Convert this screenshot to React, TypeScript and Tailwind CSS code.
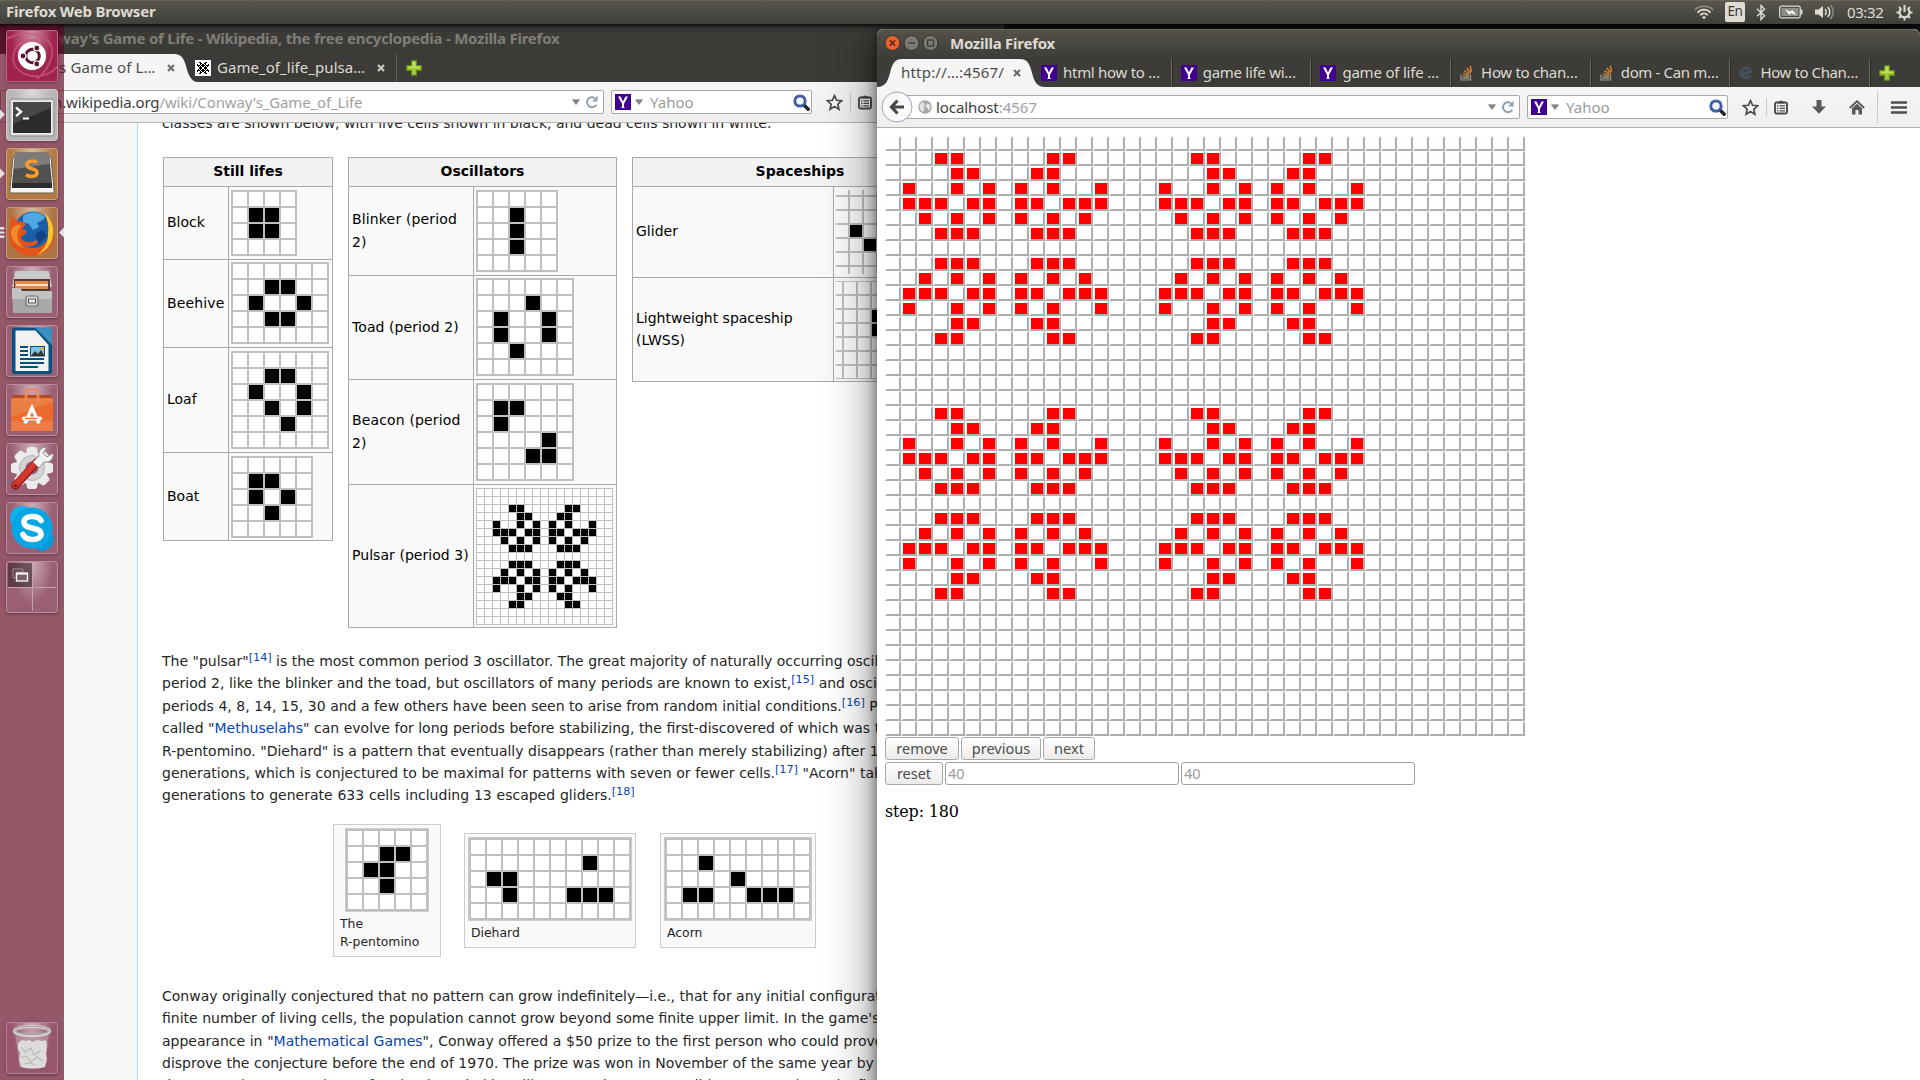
import React from "react";

type Cell = [number, number];

/* Grid of live and dead cells, used by every pattern figure of the article. */
function Life({ cols, rows, live, pitch = 16, line = 2 }: { cols: number; rows: number; live: Cell[]; pitch?: number; line?: number }) {
  const w = cols * pitch + line;
  const h = rows * pitch + line;
  const on = new Set(live.map(([r, c]) => r * 100 + c));
  const size = pitch - line;
  return (
    <svg width={w} height={h} viewBox={`0 0 ${w} ${h}`} shapeRendering="crispEdges" className="block shrink-0">
      <rect width={w} height={h} fill="#bfbfbf" />
      {Array.from({ length: rows * cols }, (_, i) => {
        const r = Math.floor(i / cols);
        const c = i % cols;
        return <rect key={i} x={c * pitch + line} y={r * pitch + line} width={size} height={size} fill={on.has(r * 100 + c) ? "#000" : "#fff"} />;
      })}
    </svg>
  );
}

const TOP_HALF: number[][] = [
  [3, 4, 10, 11],
  [4, 5, 9, 10],
  [1, 4, 6, 8, 10, 13],
  [1, 2, 3, 5, 6, 8, 9, 11, 12, 13],
  [2, 4, 6, 8, 10, 12],
  [3, 4, 5, 9, 10, 11],
];
const PULSAR: Cell[] = TOP_HALF.flatMap((cs, i) => cs.flatMap((c): Cell[] => [[i + 1, c], [13 - i, c]]));

/* Window chrome icons */

const Plus = () => (
  <svg width="16" height="16" viewBox="0 0 16 16" className="shrink-0">
    <path d="M5.500.7h5v4.800h4.800v5h-4.800v4.800h-5v-4.800H.7v-5h4.800z" fill="#8ab82c" stroke="#5d8f1c" />
    <path d="M6.500 1.800h3v4.700h4.700v1.900H1.800V6.500h4.700z" fill="#c6df52" />
    <path d="M6.500 8h3v6.200h-3z" fill="#a5cc3a" />
  </svg>
);
const YahooIcon = () => (
  <svg width="16" height="16" viewBox="0 0 16 16" className="shrink-0">
    <rect width="16" height="16" fill="#400090" />
    <path d="M3 2.500h2.600L8 7.400l2.400-4.900H13L9 9.800V13.500h1V14H6v-.5h1V9.800z" fill="#fff" />
  </svg>
);
const Arrow = () => (
  <svg width="8" height="6" viewBox="0 0 8 6" className="shrink-0">
    <path d="M.5.8h7L4 5.500z" fill="#8a8a8a" stroke="#6a6a6a" strokeWidth=".6" />
  </svg>
);
const Reload = () => (
  <svg width="14" height="14" viewBox="0 0 14 14" className="shrink-0">
    <path d="M11.300 9.800A5 5 0 1 1 10 3.200" fill="none" stroke="#93a0ae" strokeWidth="2" />
    <path d="M12.600.8v5.700H7z" fill="#93a0ae" />
  </svg>
);
const Magnifier = () => (
  <svg width="17" height="17" viewBox="0 0 17 17" className="shrink-0">
    <path d="M11.500 11.500l3.700 3.700" stroke="#222" strokeWidth="3.400" strokeLinecap="round" />
    <circle cx="7" cy="7" r="5.200" fill="#eef3fb" stroke="#27408b" strokeWidth="2.800" />
    <circle cx="7" cy="7" r="5.400" fill="none" stroke="#6e8fd0" strokeWidth=".8" />
  </svg>
);
const Star = () => (
  <svg width="17" height="17" viewBox="0 0 17 17" className="shrink-0">
    <path d="M8.500 1.600l2.100 4.700 5 .5-3.800 3.400 1.100 5-4.400-2.600-4.400 2.600 1.100-5L1.400 6.800l5-.5z" fill="#fafafa" stroke="#4a4a4a" strokeWidth="1.700" strokeLinejoin="miter" />
  </svg>
);
const Clipboard = () => (
  <svg width="14" height="16" viewBox="0 0 14 16" className="shrink-0">
    <rect x="1" y="3.500" width="12" height="11" rx="1.500" fill="#fafafa" stroke="#4a4a4a" strokeWidth="1.900" />
    <path d="M3.500 4.500V2.500h2a1.600 1.600 0 0 1 3 0h2v2z" fill="#4a4a4a" />
    <path d="M3 6.800h1.500M5.500 6.800H11M3 9.300h1.500M5.500 9.300H11M3 11.800h1.500M5.500 11.800H11" stroke="#4a4a4a" strokeWidth="1.300" />
  </svg>
);
const Close = ({ c }: { c: string }) => (
  <svg width="8" height="8" viewBox="0 0 8 8" className="shrink-0">
    <path d="M1 1l6 6M7 1l-6 6" stroke={c} strokeWidth="2.100" />
  </svg>
);
const StackIcon = () => (
  <svg width="13" height="16" viewBox="0 0 13 16" className="shrink-0">
    <path d="M1 9.500V15h9.500V9.500" fill="none" stroke="#9a9b9c" strokeWidth="1.200" />
    <path d="M2.500 13h6.500" stroke="#b0a890" strokeWidth="1.200" />
    <path d="M2.600 10.800l6.400.7" stroke="#a98f5e" strokeWidth="1.300" />
    <path d="M3 8.300l6.200 1.900" stroke="#c08b44" strokeWidth="1.300" />
    <path d="M4.200 5.600l5.500 3.400" stroke="#d48336" strokeWidth="1.300" />
    <path d="M6.800 3l3.800 5" stroke="#e8812e" strokeWidth="1.400" />
    <path d="M10.200.8l1.300 6" stroke="#f48024" strokeWidth="1.500" />
  </svg>
);

/* Launcher */

function Tile({ tint, children }: { tint: string; children?: React.ReactNode }) {
  return (
    <div className={`relative flex h-[52px] w-[52px] shrink-0 items-center justify-center overflow-hidden rounded-[4px] border border-white/30 shadow-[0_1px_3px_rgba(0,0,0,0.35)] ${tint}`}>
      <div className="absolute inset-0 bg-[radial-gradient(ellipse_at_50%_0%,rgba(255,255,255,0.5),rgba(255,255,255,0)_60%)]" />
      <svg width="50" height="50" viewBox="0 0 50 50" className="relative">{children}</svg>
    </div>
  );
}

const TEETH = [0, 45, 90, 135, 180, 225, 270, 315];

function Launcher() {
  return (
    <div className="absolute left-0 top-0 z-20 flex h-[1056px] w-16 flex-col items-center bg-[rgba(95,2,28,0.65)] pt-[6px]">
      <div className="flex flex-col gap-[7px]">
        <Tile tint="bg-[#a0234f]">
          <path d="M0 8C14 0 36 0 44 14C48 26 40 40 30 48M50 36C36 52 8 46 6 28C6 14 18 6 30 10" fill="none" stroke="#c9587f" strokeWidth="2" opacity=".7" />
          <circle cx="25" cy="25" r="14" fill="#fff" />
          <circle cx="25.500" cy="25" r="6.800" fill="none" stroke="#5e1435" strokeWidth="3" />
          <g fill="#5e1435" stroke="#fff" strokeWidth="1.200">
            <circle cx="16" cy="25" r="3" /><circle cx="29.800" cy="17" r="3" /><circle cx="29.800" cy="33" r="3" />
          </g>
        </Tile>
        <Tile tint="bg-[#b9b4b6]">
          <rect x="3" y="9" width="44" height="37" rx="2" fill="#d9d9d9" stroke="#8b8b8b" />
          <rect x="5.500" y="11.500" width="39" height="32" fill="#2b2b2a" stroke="#f0f0f0" />
          <path d="M6 12h38v6L6 34z" fill="#474745" />
          <path d="M9 17.500l5 4.300-5 4.300" fill="none" stroke="#fff" strokeWidth="2.400" />
          <path d="M16 28.500h6" stroke="#fff" strokeWidth="1.800" />
        </Tile>
        <Tile tint="bg-[#b07c43]">
          <path d="M6 8h38l3 32v3q0 1-1 1H4q-1 0-1-1v-3z" fill="#f4f4f4" stroke="#6d5a44" />
          <path d="M8 4.500q0-1 1-1h32q1 0 1 1l3 29.500H5z" fill="#52504e" />
          <path d="M8 4.500q0-1 1-1h32q1 0 1 1l1 10.500L7 20z" fill="#7d7b79" />
          <path d="M5 34h40v5H5z" fill="#2c2b2a" />
          <path d="M30 13.500c-3-2.500-10-2-10 2.500 0 5 10 2.500 10 7.500 0 4.500-7 5-11 2.200" fill="none" stroke="#ff9b28" strokeWidth="3.500" />
        </Tile>
        <Tile tint="bg-[#ae7444]">
          <circle cx="26" cy="22" r="18.500" fill="#1b5fa8" />
          <path d="M16 8c6-5 16-5 22 1-2 4-5 5-8 5l2 5-6 3-4-6-6-2z" fill="#4fa8e0" />
          <path d="M28 26l8-4 4 6-8 8z" fill="#12407e" />
          <path d="M4 8c3 1 5 3 7 6 3-1 6 0 8 2l-4 5 5 2c-1 4-5 4-6 7 3 5 9 5 13 3 2-1 4 0 4 1-3 4-8 6-14 4 12 6 22-2 25-9 1-5 0-9-1-14 4 4 6 9 6 14-1 12-11 19-22 19C11 48 2 39 2 27c0-8 3-12 2-19z" fill="#e2541c" />
          <path d="M37 5c7 5 10 13 9 22-1 10-8 17-16 20 8-6 11-13 11-20 1-9 0-15-4-22z" fill="#fbc62d" />
          <path d="M4 22c2-4 6-6 10-5l-3 6c-2 6 1 13 6 17C8 37 3 30 4 22z" fill="#f08a2a" />
        </Tile>
        <Tile tint="bg-[#9a5f74]">
          <path d="M8 4h34l3 16H5z" fill="#c9c9c9" />
          <path d="M7 12h36v12H7z" fill="#4e3c33" />
          <path d="M8 14h33v8H8z" fill="#e8874a" />
          <path d="M9 17h32v2H9z" fill="#ffe0bd" />
          <path d="M5 21h8l2 3h30v22H6z" fill="#a9a9a9" />
          <path d="M5 21h8l2 3h30v8H5z" fill="#c2c2c2" />
          <rect x="19" y="29" width="12" height="10" rx="2" fill="#d6d6d6" stroke="#6e6e6e" strokeWidth="1.200" />
          <rect x="21.500" y="32" width="7" height="4" fill="#eee" stroke="#555" />
        </Tile>
        <Tile tint="bg-[#9a5f74]">
          <path d="M7 1.500h24L45 18v28q0 2-2 2H7q-2 0-2-2V3.500q0-2 2-2z" fill="#09517f" />
          <path d="M8.500 4.500h20L41.500 19v26h-33z" fill="#f1f1f1" />
          <path d="M28 1.500h17V19z" fill="#3a8fbe" />
          <path d="M13 21h8M13 25h8M13 29h8M13 33h24M13 37h24M13 41h18" stroke="#06507c" strokeWidth="1.900" />
          <rect x="23.500" y="20.500" width="14" height="9.500" fill="#7cc4ea" stroke="#0a4d78" />
          <path d="M24 30l4-5 3 3 3-4 3.500 6z" fill="#333" />
          <circle cx="35.500" cy="22.500" r="1.500" fill="#e6b800" />
        </Tile>
        <Tile tint="bg-[#9a5f74]">
          <path d="M4 13h42v33H4z" fill="#ee7c45" />
          <path d="M4 13h42v23H4z" fill="#ec6a2c" />
          <path d="M4 13h42v4L4 32z" fill="#e9935a" opacity=".5" />
          <path d="M6 10h38l2 3H4z" fill="#b84a20" />
          <path d="M19 17V8q0-3 3-3h6q3 0 3 3v9" fill="none" stroke="#f08a58" strokeWidth="2.600" />
          <path d="M18 38.500L25 23l7 15.500" fill="none" stroke="#fff" strokeWidth="3.400" />
          <path d="M17 33.500h16" stroke="#fff" strokeWidth="4" strokeLinecap="round" />
          <path d="M18 33.500h12" stroke="#ee7033" strokeWidth="1.300" />
        </Tile>
        <Tile tint="bg-[#9a5f74]">
          <g fill="#ebebeb">
            {TEETH.map((a) => <path key={a} d="M20 4.500l1.500-1.500h7L30 4.500l1 6H19z" transform={`rotate(${a} 25 24)`} />)}
            <circle cx="25" cy="24" r="16.500" />
          </g>
          <circle cx="25" cy="24" r="12.500" fill="#d2d2d2" stroke="#b5b5b5" />
          <circle cx="25" cy="24" r="6.500" fill="#9a5f74" />
          <path d="M30 18L8.500 41.500" stroke="#8e1a16" strokeWidth="8" strokeLinecap="round" />
          <path d="M30 17.500L8.500 41" stroke="#d5382f" strokeWidth="6" strokeLinecap="round" />
          <path d="M26 18l6-6c-1-5 2-9 8-9l-4 6 4 4 6-4c1 6-3 10-9 9l-5 6z" fill="#f2f2f2" stroke="#8a8a8a" />
          <circle cx="8.500" cy="41.500" r="1.600" fill="#7c1512" />
        </Tile>
        <Tile tint="bg-[#9a5f74]">
          <circle cx="15" cy="15" r="12" fill="#13b0f0" />
          <circle cx="35" cy="36" r="11.500" fill="#009bd8" />
          <circle cx="25" cy="25" r="20.500" fill="#05a6e6" />
          <path d="M34 17.500c-3-5.500-17-5.500-17 1.500 0 8.500 17 4 17 12 0 7-14.500 7.500-18 .5" fill="none" stroke="#fff" strokeWidth="5.600" strokeLinecap="round" />
        </Tile>
        <Tile tint="bg-[#9a5f74]">
          <path d="M1 1h24v24H1z" fill="#3a2430" opacity=".62" />
          <path d="M25.500 1v48M1 25.500h48" stroke="#c8a4b0" strokeWidth="1" />
          <path d="M6 7h10v3H9v6H6z" fill="none" stroke="#a78d97" strokeWidth="1" />
          <rect x="9.500" y="11.500" width="11" height="7.500" fill="#7a5f6a" stroke="#fff" strokeWidth="1.300" />
          <path d="M9 11.500h12" stroke="#fff" strokeWidth="2" />
        </Tile>
      </div>
      <div className="mt-auto pb-[6px]">
        <Tile tint="bg-[#97566e]">
          <path d="M8 10h34l-4 34q-13 4-26 0z" fill="#c7a8b3" opacity=".4" />
          <path d="M11 20l4-3 4 1 3-1 4 2 4-2 5 1 4-1 1 6-1 8 1 5-2 8q-11 3-24 0l-2-8 1-6-2-4z" fill="#dcdcda" />
          <path d="M14 24l4 5 6-4 3 7 7-5M13 35l6-2 5 6 6-5 6 4M17 41l6-1 6 2" fill="none" stroke="#b9b9b7" strokeWidth="1.200" />
          <ellipse cx="25" cy="8" rx="17.500" ry="4.600" fill="none" stroke="#d8d8d4" strokeWidth="3" />
          <ellipse cx="25" cy="7.500" rx="17.500" ry="4.200" fill="none" stroke="#8b8f88" strokeWidth=".8" />
        </Tile>
      </div>
      <svg width="64" height="240" viewBox="0 0 64 240" className="absolute left-0 top-0">
        <g fill="#e6dde0">
          <path d="M0 85.500l5 5-5 5zM0 144.500l5 5-5 5zM64 203.500l-5 5 5 5z" />
          <path d="M0 203h3.500l1.500 1.500-1.500 1H0zM0 207.500h3.500l1.500 1-1.500 1H0zM0 211.500h3.500l1.500 1-1.500 1.500H0z" />
        </g>
      </svg>
    </div>
  );
}

/* Article tables */

function Row({ h, label, labelW, pad, children }: { h: string; label: string; labelW: string; pad: string; children?: React.ReactNode }) {
  return (
    <div className={`flex border-b border-[#aaa] ${h}`}>
      <div className={`flex shrink-0 items-center border-r border-[#aaa] pb-px pl-[3px] leading-[22.400px] ${labelW}`}>
        <span className="whitespace-pre">{label}</span>
      </div>
      <div className={`pl-[2px] ${pad}`}>{children}</div>
    </div>
  );
}

function Table({ title, w, children }: { title: string; w: string; children: React.ReactNode }) {
  return (
    <div className={`shrink-0 self-start border-x border-t border-[#aaa] bg-[#f9f9f9] text-black ${w}`}>
      <div className="flex h-[29px] items-center justify-center border-b border-[#aaa] bg-[#f2f2f2] pb-[2px] font-bold">{title}</div>
      {children}
    </div>
  );
}

/* Pitch-14 frame of an animated spaceship, cropped by its own bounds. */
function Ship({ h, xs, ys, cells }: { h: number; xs: number[]; ys: number[]; cells: Cell[] }) {
  return (
    <svg width="130" height={h} viewBox={`0 0 130 ${h}`} shapeRendering="crispEdges" className="block">
      <rect width="130" height={h} fill="#fbfbfb" />
      {xs.map((x) => <rect key={"x" + x} x={x} y="0" width="2" height={h} fill="#bfbfbf" />)}
      {ys.map((y) => <rect key={"y" + y} x="0" y={y} width="130" height="2" fill="#bfbfbf" />)}
      {cells.map(([x, y]) => <rect key={x + "," + y} x={x} y={y} width="12" height="12" />)}
    </svg>
  );
}

const Ref = ({ n }: { n: number }) => <span className="relative top-[-5px] text-[11.200px] leading-none text-[#0645ad]">[{n}]</span>;
const A = ({ children }: { children: React.ReactNode }) => <span className="text-[#0645ad]">{children}</span>;

function Thumb({ w, h, caption, center, children }: { w: string; h: string; caption: string; center?: boolean; children: React.ReactNode }) {
  return (
    <div className={`shrink-0 border border-[#ccc] bg-[#f9f9f9] pt-[3px] ${w} ${h}`}>
      <div className={`flex ${center ? "justify-center" : "pl-[3px]"}`}>
        <div className="border border-[#ccc]">{children}</div>
      </div>
      <div className="whitespace-pre pl-[6px] pt-[3px] text-[12.400px] leading-[18px]">{caption}</div>
    </div>
  );
}

function Article() {
  return (
    <div className="flex min-h-0 w-[878px] flex-1 overflow-hidden bg-white text-[14px] leading-[22.400px] text-[#252525] [font-family:'DejaVu_Sans',sans-serif]">
      <div className="w-[137px] shrink-0 bg-[#f6f6f6]" />
      <div className="flex min-w-0 flex-1 flex-col overflow-hidden whitespace-nowrap border-l border-[#a7d7f9] pl-6">
        <div className="-mt-[11px] h-[45px] shrink-0">classes are shown below, with live cells shown in black, and dead cells shown in white.</div>
        <div className="ml-px flex h-[493px] shrink-0">
          <Table title="Still lifes" w="w-[170px]">
            <Row h="h-[73px]" label="Block" labelW="w-[65px]" pad="pt-[3px]">
              <Life cols={4} rows={4} live={[[1, 1], [1, 2], [2, 1], [2, 2]]} />
            </Row>
            <Row h="h-[88px]" label="Beehive" labelW="w-[65px] tracking-[0.150px]" pad="pt-[2px]">
              <Life cols={6} rows={5} live={[[1, 2], [1, 3], [2, 1], [2, 4], [3, 2], [3, 3]]} />
            </Row>
            <Row h="h-[105px]" label="Loaf" labelW="w-[65px]" pad="pt-[3px]">
              <Life cols={6} rows={6} live={[[1, 2], [1, 3], [2, 1], [2, 4], [3, 2], [3, 4], [4, 3]]} />
            </Row>
            <Row h="h-[88px]" label="Boat" labelW="w-[65px]" pad="pt-[3px]">
              <Life cols={5} rows={5} live={[[1, 1], [1, 2], [2, 1], [2, 3], [3, 2]]} />
            </Row>
          </Table>
          <div className="w-[15px] shrink-0" />
          <Table title="Oscillators" w="w-[269px]">
            <Row h="h-[89px]" label={"Blinker (period\n2)"} labelW="w-[125px] tracking-[0.150px]" pad="pt-[3px]">
              <Life cols={5} rows={5} live={[[1, 2], [2, 2], [3, 2]]} />
            </Row>
            <Row h="h-[104px]" label="Toad (period 2)" labelW="w-[125px] tracking-[0.080px]" pad="pt-[2px]">
              <Life cols={6} rows={6} live={[[1, 3], [2, 1], [2, 4], [3, 1], [3, 4], [4, 2]]} />
            </Row>
            <Row h="h-[105px]" label={"Beacon (period\n2)"} labelW="w-[125px] tracking-[0.150px]" pad="pt-[3px]">
              <Life cols={6} rows={6} live={[[1, 1], [1, 2], [2, 1], [3, 4], [4, 3], [4, 4]]} />
            </Row>
            <Row h="h-[143px]" label="Pulsar (period 3)" labelW="w-[125px] tracking-[0.050px]" pad="pt-[3px]">
              <Life cols={17} rows={17} pitch={8} line={1} live={PULSAR.map(([r, c]): Cell => [r + 1, c + 1])} />
            </Row>
          </Table>
          <div className="w-[15px] shrink-0" />
          <Table title="Spaceships" w="w-[336px]">
            <Row h="h-[91px]" label="Glider" labelW="w-[201px]" pad="pt-[3px]">
              <Ship h={84} xs={[12, 26, 40]} ys={[5, 19, 33, 47, 61, 75]} cells={[[14, 35], [28, 49]]} />
            </Row>
            <Row h="h-[104px]" label={"Lightweight spaceship\n(LWSS)"} labelW="w-[201px]" pad="pt-[3px]">
              <Ship h={98} xs={[6, 20, 34]} ys={[-1, 13, 27, 41, 55, 69, 83, 97]} cells={[[36, 29], [36, 43]]} />
            </Row>
          </Table>
        </div>
        <div>The "pulsar"<Ref n={14} /> is the most common period 3 oscillator. The great majority of naturally occurring oscillators</div>
        <div className="[word-spacing:0.060px]">period 2, like the blinker and the toad, but oscillators of many periods are known to exist,<Ref n={15} /> and oscillators</div>
        <div className="[word-spacing:0.080px]">periods 4, 8, 14, 15, 30 and a few others have been seen to arise from random initial conditions.<Ref n={16} /> Patterns</div>
        <div className="[word-spacing:0.080px]">called "<A>Methuselahs</A>" can evolve for long periods before stabilizing, the first-discovered of which was the</div>
        <div>R-pentomino. "Diehard" is a pattern that eventually disappears (rather than merely stabilizing) after 130</div>
        <div className="[word-spacing:0.130px]">generations, which is conjectured to be maximal for patterns with seven or fewer cells.<Ref n={17} /> "Acorn" takes</div>
        <div className="[word-spacing:0.400px]">generations to generate 633 cells including 13 escaped gliders.<Ref n={18} /></div>
        <div className="ml-[171px] mt-[17px] flex h-[161px] shrink-0">
          <Thumb w="w-[108px]" h="h-[133px]" caption={"The\nR-pentomino"} center>
            <Life cols={5} rows={5} live={[[1, 2], [1, 3], [2, 1], [2, 2], [3, 2]]} />
          </Thumb>
          <div className="ml-[23px] mt-[9px]">
            <Thumb w="w-[172px]" h="h-[115px]" caption="Diehard">
              <Life cols={10} rows={5} live={[[1, 7], [2, 1], [2, 2], [3, 2], [3, 6], [3, 7], [3, 8]]} />
            </Thumb>
          </div>
          <div className="ml-[24px] mt-[9px]">
            <Thumb w="w-[156px]" h="h-[115px]" caption="Acorn">
              <Life cols={9} rows={5} live={[[1, 2], [2, 4], [3, 1], [3, 2], [3, 5], [3, 6], [3, 7]]} />
            </Thumb>
          </div>
        </div>
        <div>Conway originally conjectured that no pattern can grow indefinitely—i.e., that for any initial configuration</div>
        <div>finite number of living cells, the population cannot grow beyond some finite upper limit. In the game's</div>
        <div className="[word-spacing:0.200px]">appearance in "<A>Mathematical Games</A>", Conway offered a $50 prize to the first person who could prove</div>
        <div className="[word-spacing:0.100px]">disprove the conjecture before the end of 1970. The prize was won in November of the same year by</div>
        <div>the <A>Massachusetts Institute of Technology</A>, led by <A>Bill Gosper</A>; the "Gosper glider gun" produces its first</div>
      </div>
    </div>
  );
}

function LeftWindow() {
  return (
    <div className="absolute left-0 top-0 flex h-[1056px] w-[1004px] flex-col">
      <div className="flex h-[30px] shrink-0 items-center bg-linear-to-b from-[#2a2926] to-[#3c3b37] to-30% pb-[2px] pl-[30px] text-[15px] font-bold text-[#807d78]">
        <span className="w-[550px] whitespace-nowrap tracking-[-0.225px]">Conway's Game of Life - Wikipedia, the free encyclopedia - Mozilla Firefox</span>
      </div>
      <div className="flex h-[28px] shrink-0 items-center bg-[#3c3b37] text-[15px] text-[#dedbd3]">
        <div className="relative flex h-[28px] w-[195px] shrink-0 items-center text-[#4c4c4c]">
          <svg width="200" height="28" viewBox="0 0 200 28" className="absolute left-0 top-0">
            <path d="M0 0h174c8 0 10 5 12 12 2 8 5 16 12 16H0z" fill="#f6f5f4" />
          </svg>
          <span className="relative ml-[56px] w-[111px] whitespace-nowrap pb-px tracking-[0.150px]">'s Game of L…</span>
          <span className="relative"><Close c="#6b6b6b" /></span>
        </div>
        <svg width="16" height="16" viewBox="0 0 17 17" className="shrink-0" shapeRendering="crispEdges">
          <rect width="17" height="17" fill="#fff" />
          {PULSAR.map(([r, c]) => <rect key={r + "-" + c} x={c + 1} y={r + 1} width="1" height="1" />)}
        </svg>
        <span className="ml-[6px] w-[160px] whitespace-nowrap pb-px tracking-[0.050px]">Game_of_life_pulsa…</span>
        <Close c="#cfccc5" />
        <div className="ml-[11px] mr-[9px] h-[28px] w-px bg-[#5f5d57]" />
        <Plus />
      </div>
      <div className="flex h-[41px] shrink-0 items-start border-b border-[#b5b3b0] bg-linear-to-b from-[#f6f5f4] to-[#f0efed] pt-2 text-[15px]">
        <div className="flex h-[24px] w-[604px] shrink-0 items-center rounded-[2px] border border-[#aba9a6] bg-white pl-[52px] text-[#a0a0a0]">
          <span className="w-[519px] whitespace-nowrap tracking-[-0.130px]"><span className="text-[#3c3c3c]">n.wikipedia.org</span>/wiki/Conway's_Game_of_Life</span>
          <Arrow />
          <span className="ml-[5px]"><Reload /></span>
        </div>
        <div className="ml-[7px] flex h-[24px] w-[201px] shrink-0 items-center rounded-[2px] border border-[#aba9a6] bg-white pl-[3px] text-[#9a9a9a]">
          <YahooIcon />
          <span className="ml-[4px]"><Arrow /></span>
          <span className="ml-[7px] w-[143px] whitespace-nowrap">Yahoo</span>
          <Magnifier />
        </div>
        <div className="ml-[14px] flex h-[24px] items-center">
          <Star />
          <div className="ml-[7px] mr-[7px] h-[18px] w-px bg-[#c3cad2]" />
          <Clipboard />
        </div>
      </div>
      <Article />
    </div>
  );
}

/* Simulator window */

const LIVE = new Set(
  PULSAR.flatMap(([r, c]) => [0, 17].flatMap((dr) => [0, 16].map((dc) => (r + dr) * 40 + c + dc)))
);

function Board() {
  return (
    <div className="grid w-[640px] auto-rows-[15px] grid-cols-[repeat(40,16px)]">
      {Array.from({ length: 1600 }, (_, i) => (
        <div key={i} className={`border-2 border-b-[#aeaeae] border-l-[#fcfcfc] border-r-[#aeaeae] border-t-[#fcfcfc] ${LIVE.has(i) ? "bg-[#ff0000]" : "bg-white"}`} />
      ))}
    </div>
  );
}

const EIcon = () => (
  <svg width="14" height="14" viewBox="0 0 14 14" className="shrink-0">
    <path d="M3 8.300l8.500-2.300C11 3.200 9 2 6.800 2 4 2 2 4.300 2 7.200 2 10 4 12 7 12c2 0 3.300-.7 4.500-2" fill="none" stroke="#44505c" strokeWidth="3" />
  </svg>
);

function Tab({ icon, text, gap, t }: { icon: React.ReactNode; text: string; gap: string; t: string }) {
  return (
    <div className="flex h-[28px] w-[139.700px] shrink-0 items-center border-r border-[#6a6862] pl-[9px] shadow-[1px_0_0_#2b2a27]">
      {icon}
      <span className={`whitespace-nowrap pb-[2px] ${gap} ${t}`}>{text}</span>
    </div>
  );
}

const Btn = ({ w, children }: { w: string; children: string }) => (
  <div className={`flex h-[23px] shrink-0 items-center justify-center rounded-[3px] border border-[#aaa8a4] bg-linear-to-b from-white to-[#ecebe9] text-[#4c4c4c] ${w}`}>{children}</div>
);
const Field = () => <div className="flex h-[23px] w-[234px] shrink-0 items-center rounded-[3px] border border-[#a3a19d] bg-white pl-[2px] text-[#9b9b9b]">40</div>;

function RightWindow() {
  return (
    <div className="absolute left-[877px] top-[5px] z-10 flex h-[1100px] w-[1043px] flex-col rounded-t-[6px] bg-white shadow-[0_4px_14px_rgba(0,0,0,0.5),0_4px_50px_rgba(0,0,0,0.5)]">
      <div className="flex h-[30px] shrink-0 items-center rounded-t-[6px] border-t border-[#6b685d] bg-linear-to-b from-[#55524a] to-[#3d3c38] pb-[3px] pl-[7px]">
        <svg width="56" height="18" viewBox="0 0 56 18" className="shrink-0">
          <circle cx="8.500" cy="9" r="7.500" fill="#e8602f" stroke="#33312c" />
          <path d="M5.800 6.300l5.400 5.400M11.200 6.300l-5.400 5.400" stroke="#52251a" strokeWidth="1.400" />
          <circle cx="27.500" cy="9" r="7.500" fill="#7b7971" stroke="#33312c" />
          <path d="M24 9h7" stroke="#3a3935" strokeWidth="1.300" />
          <circle cx="46.500" cy="9" r="7.500" fill="#7b7971" stroke="#33312c" />
          <rect x="43.500" y="6" width="6" height="6" fill="none" stroke="#3a3935" strokeWidth="1.200" />
        </svg>
        <span className="ml-[10px] whitespace-nowrap pb-px text-[15px] font-bold leading-[20px] tracking-[-0.250px] text-[#dfdbd2]">Mozilla Firefox</span>
      </div>
      <div className="flex h-[28px] shrink-0 items-center bg-[#3d3c38] text-[15px] text-[#dfdbd2]">
        <div className="relative flex h-[28px] w-[155px] shrink-0 items-center text-[#4c4c4c]">
          <svg width="168" height="28" viewBox="0 0 168 28" className="absolute left-0 top-0">
            <path d="M0 28c9 0 11-7 13-14 2-8 4-14 12-14h118c8 0 10 6 12 14 2 7 4 14 13 14z" fill="#f6f5f4" />
          </svg>
          <span className="relative ml-[24px] w-[112px] whitespace-nowrap pb-[2px] tracking-[0.200px]">http://…:4567/</span>
          <span className="relative"><Close c="#6b6b6b" /></span>
        </div>
        <Tab icon={<YahooIcon />} gap="ml-[6px]" t="tracking-[-0.280px]" text="html how to …" />
        <Tab icon={<YahooIcon />} gap="ml-[6px]" t="tracking-[-0.280px]" text="game life wi…" />
        <Tab icon={<YahooIcon />} gap="ml-[6px]" t="tracking-[-0.200px]" text="game of life …" />
        <Tab icon={<StackIcon />} gap="ml-[8px]" t="tracking-[-0.300px]" text="How to chan…" />
        <Tab icon={<StackIcon />} gap="ml-[8px]" t="tracking-[-0.350px]" text="dom - Can m…" />
        <Tab icon={<EIcon />} gap="ml-[7px]" t="tracking-[-0.400px]" text="How to Chan…" />
        <div className="w-[9px] shrink-0" />
        <Plus />
      </div>
      <div className="relative flex h-[41px] shrink-0 items-start border-b border-[#aeaca9] bg-linear-to-b from-[#f6f5f4] to-[#f0efed] pt-2 text-[15px]">
        <svg width="32" height="32" viewBox="0 0 32 32" className="absolute left-[4px] top-[4px] z-10">
          <circle cx="16" cy="16" r="15" fill="#fafafa" stroke="#98a5b3" />
          <path d="M16.500 9.500L10.500 16l6 6.500M10.500 16H23" fill="none" stroke="#474747" strokeWidth="3.200" />
        </svg>
        <div className="ml-[28px] flex h-[24px] w-[615px] shrink-0 items-center rounded-[2px] border border-[#aba9a6] bg-white pl-[12px] text-[#a0a0a0]">
          <svg width="14" height="14" viewBox="0 0 14 14" className="shrink-0">
            <circle cx="7" cy="7" r="6.800" fill="#a6a6a6" />
            <path d="M1.500 5c2-3 4-3 5-3l-1 2 2 1-2 2 1 3-2 2C2 10 1 8 1.500 5zM9 3l3 2 .5 3-2 3-1-3-2-1z" fill="#e3e3e3" />
          </svg>
          <span className="ml-[4px] w-[552px] whitespace-nowrap"><span className="tracking-[-0.080px] text-[#3c3c3c]">localhost</span>:4567</span>
          <Arrow />
          <span className="ml-[5px]"><Reload /></span>
        </div>
        <div className="ml-[7px] flex h-[24px] w-[201px] shrink-0 items-center rounded-[2px] border border-[#aba9a6] bg-white pl-[3px] text-[#9a9a9a]">
          <YahooIcon />
          <span className="ml-[4px]"><Arrow /></span>
          <span className="ml-[7px] w-[143px] whitespace-nowrap">Yahoo</span>
          <Magnifier />
        </div>
        <div className="ml-[14px] flex h-[24px] items-center">
          <Star />
          <div className="ml-[7px] mr-[7px] h-[18px] w-px bg-[#c3cad2]" />
          <Clipboard />
          <svg width="14" height="14" viewBox="0 0 14 14" className="ml-[24px]">
            <path d="M4.500 0h5v6.500H14L7 13.700 0 6.500h4.500z" fill="#5a5a5a" />
          </svg>
          <svg width="16" height="15" viewBox="0 0 16 15" className="ml-[23px]">
            <path d="M.8 8L8 1.200 15.200 8" fill="none" stroke="#5a5a5a" strokeWidth="1.900" />
            <path d="M3 8.300L8 3.800l5 4.500V14.500H9.500V10h-3v4.500H3z" fill="#5a5a5a" />
          </svg>
          <div className="ml-[12px] mr-[13px] h-[32px] w-px bg-[#c3cad2]" />
          <svg width="16" height="13" viewBox="0 0 16 13">
            <path d="M0 1.500h16M0 6.500h16M0 11.500h16" stroke="#4d4d4d" strokeWidth="2.600" />
          </svg>
        </div>
      </div>
      <div className="flex flex-col pl-2 pt-2">
        <Board />
        <div className="mt-px flex gap-[2px] text-[14.500px]">
          <Btn w="w-[74px]">remove</Btn>
          <Btn w="w-[80px]">previous</Btn>
          <Btn w="w-[52px]">next</Btn>
        </div>
        <div className="mt-[2px] flex gap-[2px] text-[14.500px]">
          <Btn w="w-[58px]">reset</Btn>
          <Field />
          <Field />
        </div>
        <div className="mt-[16px] text-[16px] leading-[22px] tracking-[-0.180px] text-black [font-family:'DejaVu_Serif',serif]">step: 180</div>
      </div>
    </div>
  );
}

function TopPanel() {
  return (
    <div className="flex h-6 shrink-0 items-center border-t border-[#68664f] bg-linear-to-b from-[#58564e] to-[#3f3e39] pb-px pl-[6px] text-[15px] text-[#dfdbd2]">
      <span className="flex-1 pb-px font-bold tracking-[-0.220px]">Firefox Web Browser</span>
      <svg width="20" height="16" viewBox="0 0 20 16">
        <g fill="none" strokeWidth="1.700">
          <path d="M.8 6.200C5 .9 15 .9 19.200 6.200" stroke="#8d8b84" />
          <path d="M3.500 8.800c3-4.200 10-4.200 13 0" stroke="#dfdbd2" />
          <path d="M6.200 11.300c2-2.600 5.600-2.600 7.600 0" stroke="#dfdbd2" />
        </g>
        <path d="M8 13.200c1-1.200 3-1.200 4 0l-2 2z" fill="#dfdbd2" />
      </svg>
      <div className="ml-[11px] flex h-[20px] w-[20px] items-center justify-center rounded-[2px] bg-[#dfdbd2] text-[13.500px] leading-none tracking-[-0.500px] text-[#3c3b37]">En</div>
      <svg width="10" height="17" viewBox="0 0 10 17" className="ml-[11px]">
        <path d="M1 4.800l7.500 7L5 15.500V1.500l3.500 3.700L1 12.200" fill="none" stroke="#dfdbd2" strokeWidth="1.400" />
      </svg>
      <svg width="24" height="14" viewBox="0 0 24 14" className="ml-[13px]">
        <rect x=".7" y="1.200" width="20.500" height="11.600" rx="1.500" fill="none" stroke="#dfdbd2" strokeWidth="1.300" />
        <rect x="2.500" y="3" width="17" height="8" fill="#8f8d86" />
        <path d="M22.500 4.500v5" stroke="#dfdbd2" strokeWidth="1.800" />
        <path d="M6 4.500l6 2.300 1-2L17.500 10l-6-2-1 2z" fill="#fff" />
      </svg>
      <svg width="20" height="16" viewBox="0 0 20 16" className="ml-[12px]">
        <path d="M0 5.500h3.500L8 2v12L3.500 10.500H0z" fill="#dfdbd2" />
        <g fill="none" strokeWidth="1.500">
          <path d="M10 5c1.500 1.800 1.500 4.200 0 6M12.700 3c2.600 3 2.600 7 0 10" stroke="#dfdbd2" />
          <path d="M15.500 1c3.600 4.200 3.600 9.800 0 14" stroke="#8d8b84" />
        </g>
      </svg>
      <span className="ml-[12px] w-[49px] tracking-[-0.400px]">03:32</span>
      <svg width="17" height="17" viewBox="0 0 17 17" className="mr-[7px]">
        <path d="M5.300 4.600a5 5 0 1 0 6.400 0" fill="none" stroke="#dfdbd2" strokeWidth="2.200" />
        <path d="M8.500 1v7" stroke="#dfdbd2" strokeWidth="2" />
        <path d="M3 3l2 2M14 3l-2 2M.5 8.500h3M13.500 8.500h3M3 14l2-2M14 14l-2-2M8.500 13.500v3" stroke="#dfdbd2" strokeWidth="1.800" />
      </svg>
    </div>
  );
}

export default function App() {
  return (
    <div className="flex h-[1080px] w-[1920px] flex-col overflow-hidden bg-[#111] [font-family:'Noto_Sans','Open_Sans',sans-serif]">
      <TopPanel />
      <div className="relative min-h-0 flex-1 overflow-hidden">
        <LeftWindow />
        <RightWindow />
        <Launcher />
        <div className="absolute left-0 top-0 z-30 h-[4px] w-full bg-linear-to-b from-black/60 to-transparent" />
      </div>
    </div>
  );
}
